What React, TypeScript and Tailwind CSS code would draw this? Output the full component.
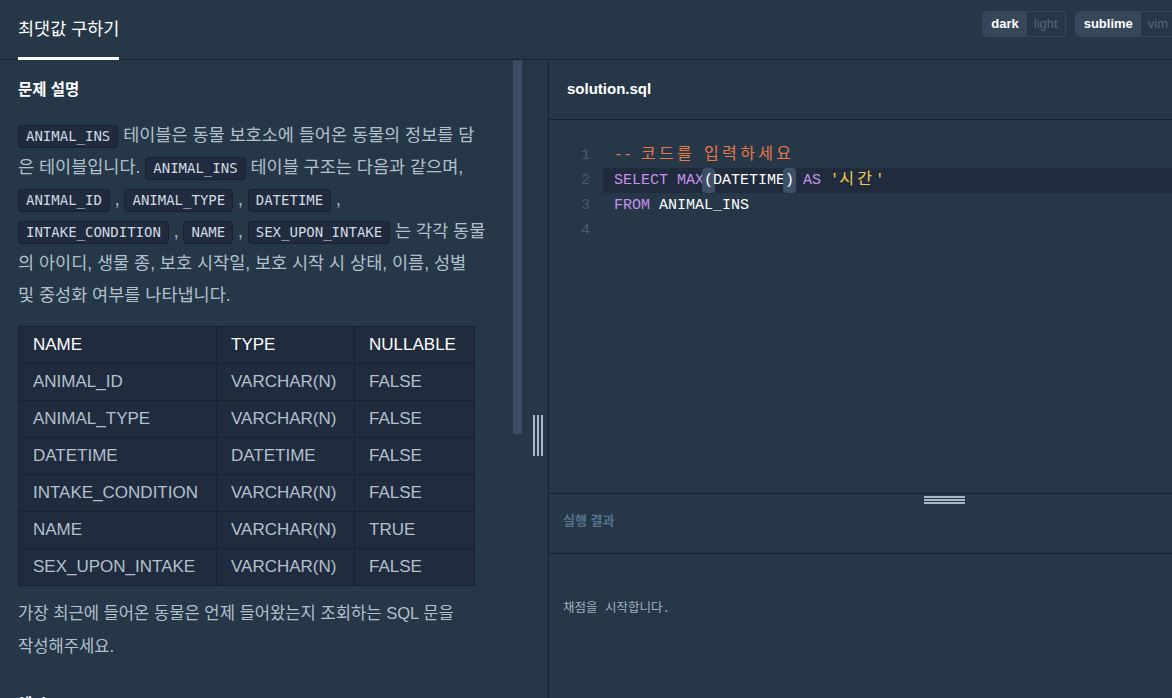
import React from "react";

const sans = "font-['Liberation_Sans','Noto_Sans_CJK_KR',sans-serif]";
const mono = "font-['Liberation_Mono','Noto_Sans_CJK_KR',monospace]";
const chip =
  "inline-block rounded-[4px] border border-[#172130] bg-[#202b3d] px-[7px] leading-[21px] text-[14px] text-[#d0d9e2] font-['DejaVu_Sans_Mono',monospace] align-middle";
// hangul in the editor takes two cells, like a Korean coding font
const wide = "text-[16px] tracking-[3.3px]";

const rows = [
  ["ANIMAL_ID", "VARCHAR(N)", "FALSE"],
  ["ANIMAL_TYPE", "VARCHAR(N)", "FALSE"],
  ["DATETIME", "DATETIME", "FALSE"],
  ["INTAKE_CONDITION", "VARCHAR(N)", "FALSE"],
  ["NAME", "VARCHAR(N)", "TRUE"],
  ["SEX_UPON_INTAKE", "VARCHAR(N)", "FALSE"],
];

function Toggle({ on, off }: { on: string; off: string }) {
  return (
    <div className="flex h-[26px] overflow-hidden rounded-[4px] border border-[#37475a] text-[13px]">
      <span className="flex items-center bg-[#37475a] px-[8px] font-bold text-white">{on}</span>
      <span className="flex items-center px-[7px] text-[#56687c]">{off}</span>
    </div>
  );
}

function C({ children }: { children: React.ReactNode }) {
  return <code className={chip}>{children}</code>;
}

function Ln({ n, hl, children }: { n: number; hl?: boolean; children?: React.ReactNode }) {
  return (
    <div className="flex h-[25px]">
      <span className="w-[54px] shrink-0 pr-[13px] text-right text-[#485a6e]">{n}</span>
      <span className={`flex-1 whitespace-pre pl-[11px] text-white ${hl ? "bg-[#202b3d]" : ""}`}>{children}</span>
    </div>
  );
}

const bracket = "inline-block h-[25px] rounded-[4px] bg-[#3d5068] px-[2px] -mx-[2px]";

export default function App() {
  return (
    <div className={`flex h-[698px] w-[1172px] flex-col overflow-hidden bg-[#263747] ${sans}`}>
      {/* top bar */}
      <div className="flex h-[60px] shrink-0 items-stretch justify-between border-b border-[#172130] pl-[18px]">
        <div className="-mb-px flex items-center border-b-[3px] border-white pt-[2px] text-[17.5px] text-white">
          최댓값 구하기
        </div>
        <div className="-mr-[4px] flex gap-[9px] pt-[11px]">
          <Toggle on="dark" off="light" />
          <Toggle on="sublime" off="vim" />
        </div>
      </div>

      <div className="flex min-h-0 flex-1">
        {/* description */}
        <div className="relative w-[549px] shrink-0 border-r border-[#172130]">
          <div className="h-full overflow-hidden pl-[18px] pt-[19px] text-[#b2c0cc]">
            <h4 className="text-[15.5px] font-bold leading-[22px] text-white">문제 설명</h4>
            <p className="mt-[18px] whitespace-nowrap text-[17.5px] leading-[32px]">
              <C>ANIMAL_INS</C> 테이블은 동물 보호소에 들어온 동물의 정보를 담
              <br />은 테이블입니다. <C>ANIMAL_INS</C> 테이블 구조는 다음과 같으며,
              <br />
              <C>ANIMAL_ID</C> , <C>ANIMAL_TYPE</C> , <C>DATETIME</C> ,
              <br />
              <C>INTAKE_CONDITION</C> , <C>NAME</C> , <C>SEX_UPON_INTAKE</C> 는 각각 동물
              <br />의 아이디, 생물 종, 보호 시작일, 보호 시작 시 상태, 이름, 성별
              <br />및 중성화 여부를 나타냅니다.
            </p>
            <table className="mt-[15px] w-[457px] border-collapse bg-[#202b3d] text-[17px]">
              <thead>
                <tr className="h-[37px] text-white">
                  <th className="w-[198px] border border-[#172130] px-[14px] text-left font-normal">NAME</th>
                  <th className="w-[138px] border border-[#172130] px-[14px] text-left font-normal">TYPE</th>
                  <th className="border border-[#172130] px-[14px] text-left font-normal">NULLABLE</th>
                </tr>
              </thead>
              <tbody>
                {rows.map((r) => (
                  <tr key={r[0]} className="h-[37px]">
                    {r.map((c, i) => (
                      <td key={i} className="border border-[#172130] px-[14px]">
                        {c}
                      </td>
                    ))}
                  </tr>
                ))}
              </tbody>
            </table>
            <p className="mt-[11px] whitespace-nowrap text-[16.6px] leading-[33px]">
              가장 최근에 들어온 동물은 언제 들어왔는지 조회하는 SQL 문을
              <br />
              작성해주세요.
            </p>
            <h5 className="mt-[30px] text-[15.5px] font-bold text-white">예시</h5>
          </div>
          {/* scrollbar */}
          <div className="absolute left-[513px] top-0 h-[374px] w-[9px] bg-[#3c4d63]" />
          {/* splitter grip */}
          <div className="absolute left-[533px] top-[355px] flex h-[41px] gap-[2px]">
            <span className="w-[2px] bg-[#a9b7c5]" />
            <span className="w-[2px] bg-[#a9b7c5]" />
            <span className="w-[2px] bg-[#a9b7c5]" />
          </div>
        </div>

        {/* editor side */}
        <div className="flex min-w-0 flex-1 flex-col">
          <div className="flex h-[60px] shrink-0 items-center border-b border-[#172130] pl-[18px] text-[15px] font-bold text-white">
            solution.sql
          </div>
          <div className={`h-[374px] shrink-0 border-b border-[#172130] pt-[23px] text-[15px] leading-[25px] ${mono}`}>
            <Ln n={1}>
              <span className="text-[#e8784a]">
                -- <span className={wide}>코드를</span> <span className={wide}>입력하세요</span>
              </span>
            </Ln>
            <Ln n={2} hl>
              <span className="text-[#c792ea]">SELECT MAX</span>
              <span className={bracket}>(</span>DATETIME<span className={bracket}>)</span>{" "}
              <span className="text-[#c792ea]">AS</span>{" "}
              <span className="text-[#f2c94c]">
                '<span className={wide}>시간</span>'
              </span>
            </Ln>
            <Ln n={3}>
              <span className="text-[#c792ea]">FROM</span> ANIMAL_INS
            </Ln>
            <Ln n={4} />
          </div>
          <div className="relative flex h-[60px] shrink-0 items-center border-b border-[#172130] pb-[5px] pl-[14px] text-[13px] font-bold text-[#56738f]">
            실행 결과
            <div className="absolute left-[375px] top-[2px] flex w-[41px] flex-col gap-[1px]">
              <span className="h-[2px] bg-[#a9b7c5]" />
              <span className="h-[2px] bg-[#a9b7c5]" />
              <span className="h-[2px] bg-[#a9b7c5]" />
            </div>
          </div>
          <div className={`pl-[14px] pt-[46px] text-[12.5px] text-[#a4b2bf] ${mono}`}>채점을 시작합니다.</div>
        </div>
      </div>
    </div>
  );
}
